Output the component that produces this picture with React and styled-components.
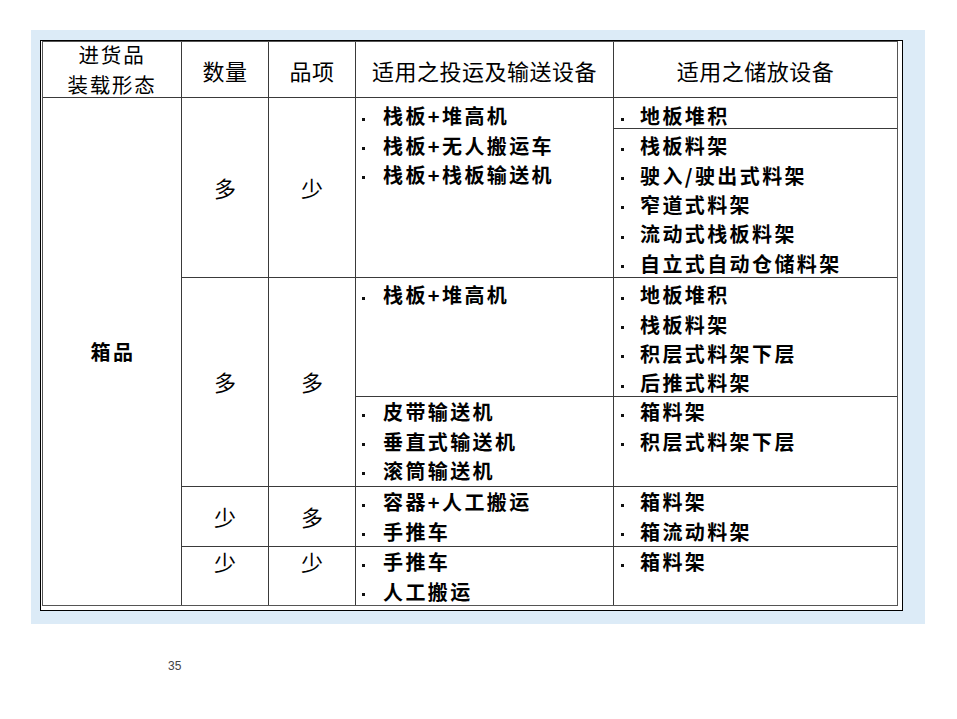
import React from 'react'
import styled, { createGlobalStyle } from 'styled-components'

const GlobalStyle = createGlobalStyle`
  html, body {
    margin: 0;
    padding: 0;
    background: #ffffff;
  }
  * {
    box-sizing: border-box;
  }
`

const SANS_CJK = `"Noto Sans CJK SC", "Noto Sans", sans-serif`

const groups = [
  {
    qty: '多',
    items: '少',
    rows: [2, 4],
    transport: [{ row: '2 / 4', pad: 3, list: ['栈板+堆高机', '栈板+无人搬运车', '栈板+栈板输送机'] }],
    storage: [
      { row: '2', pad: 3, list: ['地板堆积'] },
      { row: '3', pad: 2, list: ['栈板料架', '驶入/驶出式料架', '窄道式料架', '流动式栈板料架', '自立式自动仓储料架'] },
    ],
  },
  {
    qty: '多',
    items: '多',
    rows: [4, 6],
    transport: [
      { row: '4', pad: 2, list: ['栈板+堆高机'] },
      { row: '5', pad: 0, list: ['皮带输送机', '垂直式输送机', '滚筒输送机'] },
    ],
    storage: [
      { row: '4', pad: 2, list: ['地板堆积', '栈板料架', '积层式料架下层', '后推式料架'] },
      { row: '5', pad: 0, list: ['箱料架', '积层式料架下层'] },
    ],
  },
  {
    qty: '少',
    items: '多',
    rows: [6, 7],
    transport: [{ row: '6', pad: 0, list: ['容器+人工搬运', '手推车'] }],
    storage: [{ row: '6', pad: 0, list: ['箱料架', '箱流动料架'] }],
  },
  {
    qty: '少',
    items: '少',
    rows: [7, 8],
    top: true,
    transport: [{ row: '7', pad: 0, list: ['手推车', '人工搬运'] }],
    storage: [{ row: '7', pad: 0, list: ['箱料架'] }],
  },
]

const ItemList = ({ col, cell, indent, mark }) => (
  <ListCell $col={col} $row={cell.row} $pad={cell.pad} $indent={indent}>
    {cell.list.map((text) => (
      <Item key={text} $mark={mark}>
        {text}
      </Item>
    ))}
  </ListCell>
)

const App = () => {
  return (
    <>
      <GlobalStyle />
      <Page>
        <Slide>
          <Frame>
            <Sheet>
              <HeadCell $col="1" $row="1" $stacked>
                <HeadLine>进货品</HeadLine>
                <HeadLine>装载形态</HeadLine>
              </HeadCell>
              <HeadCell $col="2" $row="1">数量</HeadCell>
              <HeadCell $col="3" $row="1">品项</HeadCell>
              <HeadCell $col="4" $row="1">适用之投运及输送设备</HeadCell>
              <HeadCell $col="5" $row="1">适用之储放设备</HeadCell>

              <KindCell $col="1" $row="2 / 8">箱品</KindCell>

              {groups.map((g, i) => (
                <React.Fragment key={i}>
                  <ValueCell $col="2" $row={`${g.rows[0]} / ${g.rows[1]}`} $top={g.top}>
                    {g.qty}
                  </ValueCell>
                  <ValueCell $col="3" $row={`${g.rows[0]} / ${g.rows[1]}`} $top={g.top}>
                    {g.items}
                  </ValueCell>
                  {g.transport.map((cell) => (
                    <ItemList key={`t${cell.row}`} col="4" cell={cell} indent={6} mark={21} />
                  ))}
                  {g.storage.map((cell) => (
                    <ItemList key={`s${cell.row}`} col="5" cell={cell} indent={7} mark={19} />
                  ))}
                </React.Fragment>
              ))}
            </Sheet>
          </Frame>
        </Slide>
        <PageNumber>35</PageNumber>
      </Page>
    </>
  )
}

export default App

const Page = styled.div`
  padding: 30px 0 0 31px;
  width: 957px;
  height: 719px;
`

const Slide = styled.div`
  width: 894px;
  height: 594px;
  padding: 10px 22px 12px 9px;
  background: #dcebf7;
`

const Frame = styled.div`
  display: inline-block;
  border: 1px solid #000000;
  padding: 0 4px 4px 1px;
  background: #ffffff;
`

const Sheet = styled.div`
  display: grid;
  grid-template-columns: 138px 86px 86px 257px 283px;
  grid-template-rows: 55px 30px 148px 118px 89px 59px 58px;
  gap: 1px;
  border: 1px solid #555555;
  background: #3a3a3a;
  color: #000000;
  font-family: ${SANS_CJK};
`

const Cell = styled.div`
  grid-column: ${(p) => p.$col};
  grid-row: ${(p) => p.$row};
  background: #ffffff;
  min-width: 0;
  min-height: 0;
`

const HeadCell = styled(Cell)`
  display: flex;
  flex-direction: ${(p) => (p.$stacked ? 'column' : 'row')};
  align-items: center;
  justify-content: center;
  text-align: center;
  font-size: 22px;
  line-height: 28px;
  font-weight: 400;
  letter-spacing: 0.5px;
`

const HeadLine = styled.div`
  font-size: 20.5px;
  line-height: 29.7px;
  letter-spacing: 1.8px;
  white-space: nowrap;
`

const KindCell = styled(Cell)`
  display: flex;
  align-items: center;
  justify-content: center;
  font-size: 20px;
  font-weight: 700;
  letter-spacing: 2.6px;
  padding-left: 2px;
`

const ValueCell = styled(Cell)`
  display: flex;
  align-items: ${(p) => (p.$top ? 'flex-start' : 'center')};
  justify-content: center;
  font-size: 22px;
  line-height: 29.4px;
  font-weight: 400;
`

const ListCell = styled(Cell)`
  display: flex;
  flex-direction: column;
  padding-top: ${(p) => p.$pad}px;
  padding-left: ${(p) => p.$indent}px;
  overflow: visible;
`

const Item = styled.div`
  display: flex;
  align-items: center;
  height: 29.4px;
  flex: none;
  font-size: 20px;
  font-weight: 700;
  letter-spacing: 2.4px;
  white-space: nowrap;

  &::before {
    content: '';
    flex: none;
    width: 3px;
    height: 3px;
    margin-top: 7px;
    margin-right: ${(p) => p.$mark - 3}px;
    background: #111111;
  }
`

const PageNumber = styled.div`
  margin-top: 35px;
  padding-left: 137px;
  font-family: "Liberation Sans", Arial, sans-serif;
  font-size: 12px;
  line-height: 14px;
  color: #444444;
`
